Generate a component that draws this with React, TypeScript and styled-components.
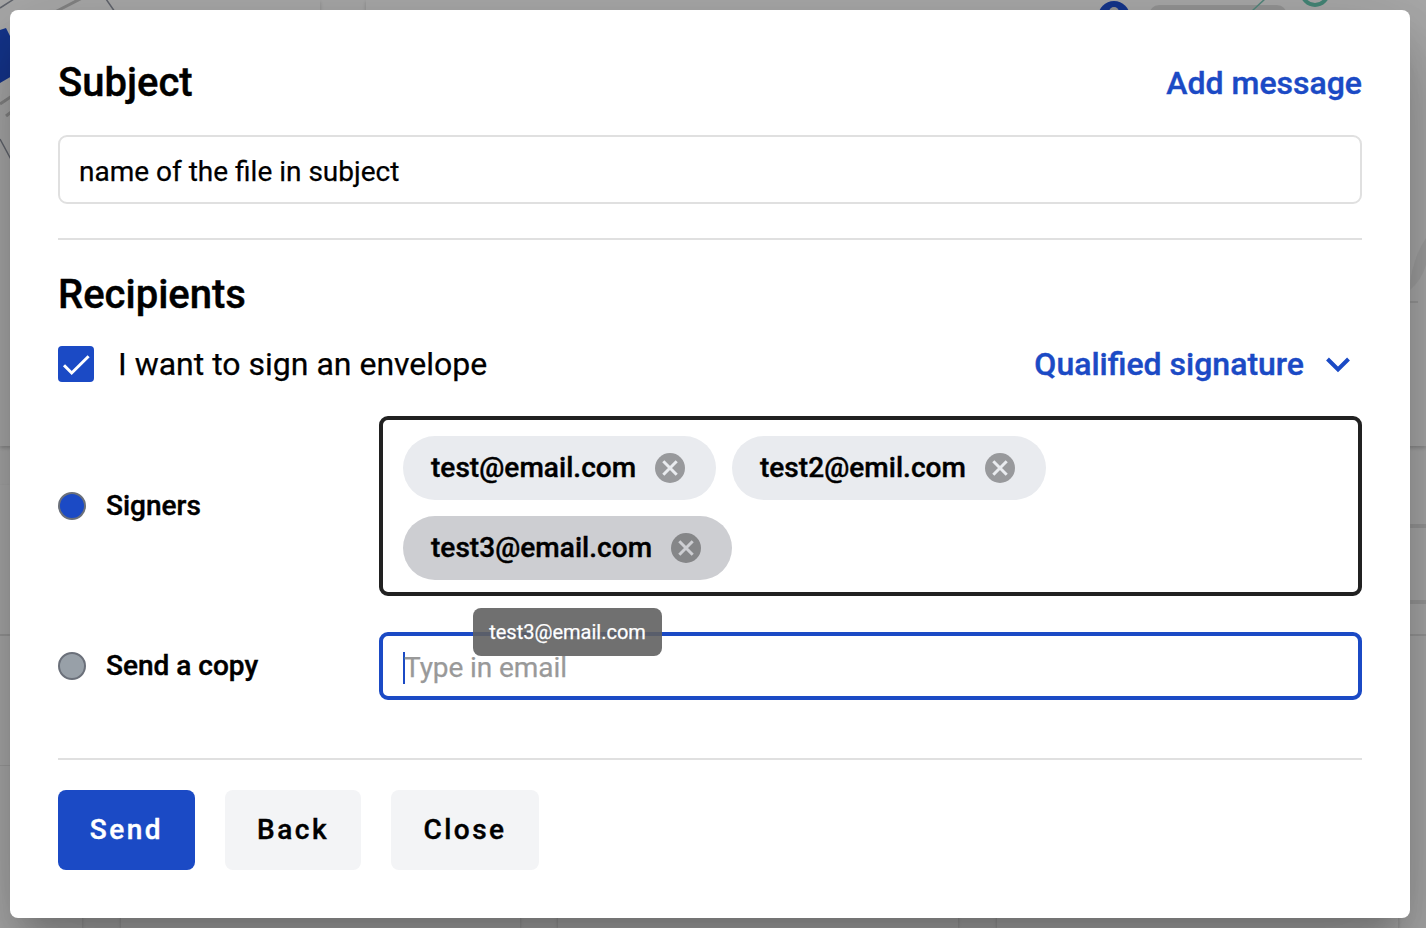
import React from 'react';
import styled, { createGlobalStyle, css } from 'styled-components';

const BLUE = '#1b4ac5';

const GlobalStyle = createGlobalStyle`
  * { box-sizing: border-box; }
  html, body { margin: 0; height: 100%; overflow: hidden; }
  body { font-family: Roboto, 'Liberation Sans', sans-serif; color: #000; background: #fafafa; }
  button, input { font-family: inherit; color: inherit; margin: 0; }
`;

const mediumText = css`
  font-weight: 500;
  -webkit-text-stroke: 0.4px currentColor;
`;

const Stage = styled.div`
  position: relative;
  width: 1426px;
  height: 928px;
  overflow: hidden;
`;

const BackPage = styled.div`
  position: absolute;
  inset: 0;
  display: flex;
  flex-direction: column;
  gap: 39px;
  background: #fafafa;
`;

const HeroRow = styled.div`
  display: grid;
  grid-template-columns: 320px 1060px;
  gap: 46px;
  height: 446px;
`;

const Panel = styled.div`
  background: #fbfbfb;
  box-shadow: 0 2px 4px rgba(0, 0, 0, 0.2);
`;

const Columns = styled.div`
  display: grid;
  grid-template-columns: 82px 399px 400px 401px;
  gap: 38.5px;
  flex: 1;
`;

const PageArt = styled.svg`
  position: absolute;
  inset: 0;
`;

const Backdrop = styled.div`
  position: absolute;
  inset: 0;
  padding: 10px 16px 10px 10px;
  background: rgba(0, 0, 0, 0.32);
`;

const Dialog = styled.section`
  position: relative;
  display: flex;
  flex-direction: column;
  height: 908px;
  padding: 48px;
  border-radius: 8px;
  background: #fff;
  box-shadow:
    0 22px 30px -14px rgba(0, 0, 0, 0.2),
    0 48px 76px 6px rgba(0, 0, 0, 0.14),
    0 18px 92px 16px rgba(0, 0, 0, 0.12);
`;

const SplitRow = styled.div<{ $height: number }>`
  display: flex;
  align-items: center;
  justify-content: space-between;
  height: ${(p) => p.$height}px;
`;

const Title = styled.h2`
  margin: 0;
  padding-top: 2px;
  font-size: 40px;
  line-height: 48px;
  ${mediumText}
`;

const LinkButton = styled.button`
  display: flex;
  align-items: center;
  gap: 22px;
  padding: 0;
  border: 0;
  background: none;
  color: ${BLUE};
  font-size: 32px;
  line-height: 40px;
  ${mediumText}
`;

const MessageButton = styled(LinkButton)`
  padding-top: 2px;
`;

const SubjectInput = styled.input`
  width: 100%;
  height: 69px;
  margin-top: 29px;
  padding: 4px 19px 0;
  border: 2px solid #e0e0e0;
  border-radius: 9px;
  background: #fff;
  font-size: 28px;
  -webkit-text-stroke: 0.25px currentColor;
  outline: none;
`;

const Divider = styled.hr`
  width: 100%;
  height: 2px;
  margin: 0;
  border: 0;
  background: #e0e0e0;
`;

const SubjectSection = styled.div`
  height: 180px;
`;

const RecipientsSection = styled.div`
  height: 518px;
  padding-top: 29px;
`;

const CheckLabel = styled.label`
  display: flex;
  align-items: center;
  gap: 24px;
  font-size: 32px;
  line-height: 40px;
  -webkit-text-stroke: 0.25px currentColor;
`;

const CheckBox = styled.span`
  display: flex;
  width: 36px;
  height: 36px;
  border-radius: 4px;
  background: ${BLUE};
`;

const SignatureSelect = styled(LinkButton)`
  padding-right: 12px;
`;

const Chevron = styled.svg`
  margin-top: 2px;
`;

const RecipientRow = styled.div<{ $height: number; $top: number }>`
  display: grid;
  grid-template-columns: 321px 1fr;
  align-items: center;
  height: ${(p) => p.$height}px;
  margin-top: ${(p) => p.$top}px;
`;

const RoleLabel = styled.div`
  display: flex;
  align-items: center;
  gap: 20px;
  font-size: 28px;
  line-height: 34px;
  ${mediumText}

  span:last-child {
    padding-bottom: 1px;
  }
`;

const RoleDot = styled.span<{ $color: string }>`
  width: 28px;
  height: 28px;
  border: 2px solid #6b707a;
  border-radius: 50%;
  background: ${(p) => p.$color};
`;

const EmailField = styled.div<{ $active?: boolean }>`
  display: flex;
  flex-wrap: wrap;
  align-content: flex-start;
  gap: 16px;
  height: 100%;
  padding: 16px 20px 12px;
  border: 4px solid ${(p) => (p.$active ? BLUE : '#212121')};
  border-radius: 9px;
`;

const Chip = styled.div<{ $hover?: boolean }>`
  display: flex;
  align-items: center;
  gap: 19px;
  height: 64px;
  padding: 0 30.8px 0 28px;
  border-radius: 32px;
  background: ${(p) => (p.$hover ? '#cdced2' : '#e9ebef')};
  font-size: 28px;
  letter-spacing: 0.04px;
  ${mediumText}

  span {
    padding-bottom: 2px;
  }
`;

const Caret = styled.span`
  width: 2px;
  height: 32px;
  background: ${BLUE};
`;

const Placeholder = styled.span`
  margin-left: -17px;
  color: #999;
  font-size: 28px;
  line-height: 32px;
  letter-spacing: -0.08px;
  -webkit-text-stroke: 0.25px currentColor;
`;

const Tooltip = styled.div`
  position: absolute;
  left: 463px;
  top: 598px;
  width: 189px;
  height: 48px;
  border-radius: 8px;
  background: rgba(97, 97, 97, 0.9);
  color: #fff;
  font-size: 20px;
  line-height: 48px;
  text-align: center;
  -webkit-text-stroke: 0.25px currentColor;
`;

const Actions = styled.div`
  display: flex;
  gap: 30px;
  margin-top: 30px;
`;

const ActionButton = styled.button<{ $primary?: boolean; $width: number }>`
  width: ${(p) => p.$width}px;
  height: 80px;
  padding: 0 0 2px;
  border: 0;
  border-radius: 8px;
  background: ${(p) => (p.$primary ? BLUE : '#f3f4f6')};
  color: ${(p) => (p.$primary ? '#fff' : '#000')};
  font-size: 28px;
  letter-spacing: 2.5px;
  ${mediumText}
`;

function RemoveIcon({ hover }: { hover?: boolean }) {
  return (
    <svg width="30" height="30" viewBox="0 0 30 30">
      <circle cx="15" cy="15" r="15" fill={hover ? '#858688' : '#98999c'} />
      <path d="M8.3 8.3l13.4 13.4M21.7 8.3l-13.4 13.4" stroke={hover ? '#cdced2' : '#e9ebef'} strokeWidth="3" />
    </svg>
  );
}

function EmailChip({ email, hover }: { email: string; hover?: boolean }) {
  return (
    <Chip $hover={hover}>
      <span>{email}</span>
      <RemoveIcon hover={hover} />
    </Chip>
  );
}

export default function App() {
  return (
    <Stage>
      <GlobalStyle />
      <BackPage aria-hidden="true">
        <HeroRow>
          <Panel />
          <Panel />
        </HeroRow>
        <Columns>
          <Panel />
          <Panel />
          <Panel />
          <Panel />
        </Columns>
        <PageArt width="1426" height="928" fill="none">
          <path d="M0 30L6 28L12 40V76L0 83Z" fill="#1f4fd0" />
          <path d="M0 8L14 -1M106 -1l9 13M0 139l14 26" stroke="#9297a3" strokeWidth="1.5" />
          <path d="M55 12L84 -3M0 104l12-8M6 116l8-6" stroke="#c4c4c4" strokeWidth="3" />
          <circle cx="1114" cy="17" r="16" fill="#1f4fd0" />
          <circle cx="1114" cy="12" r="5" fill="#ddd" />
          <rect x="1149" y="5" width="138" height="20" rx="10" fill="#dedede" />
          <path d="M1252 11l14-13" stroke="#7cc9b9" strokeWidth="1.5" />
          <circle cx="1315" cy="-8" r="13" stroke="#66c7b1" strokeWidth="4" />
          <path d="M1426 238Q1412 258 1409 291Q1422 280 1426 265Z" fill="#eee" />
          <path d="M1408 302h10" stroke="#e4e4e4" strokeWidth="2" />
          <path d="M1408 526h18M1408 602h18" stroke="#e0e0e0" strokeWidth="4" />
          <path d="M0 635h12M1408 635h18" stroke="#e0e0e0" strokeWidth="2" />
          <path d="M0 765.5h12" stroke="#e8e8e8" />
        </PageArt>
      </BackPage>
      <Backdrop>
        <Dialog>
          <SubjectSection>
            <SplitRow $height={48}>
              <Title>Subject</Title>
              <MessageButton>Add message</MessageButton>
            </SplitRow>
            <SubjectInput defaultValue="name of the file in subject" />
          </SubjectSection>
          <Divider />
          <RecipientsSection>
            <Title>Recipients</Title>
            <SplitRow $height={90}>
              <CheckLabel>
                <CheckBox>
                  <svg width="36" height="36" fill="none">
                    <path d="M6 19.3L13.7 27L30.6 10.2" stroke="#fff" strokeWidth="3" />
                  </svg>
                </CheckBox>
                I want to sign an envelope
              </CheckLabel>
              <SignatureSelect>
                Qualified signature
                <Chevron width="24" height="16" viewBox="0 0 24 16" fill="none">
                  <path d="M1.5 2L12 12.5L22.5 2" stroke={BLUE} strokeWidth="4" />
                </Chevron>
              </SignatureSelect>
            </SplitRow>
            <RecipientRow $height={180} $top={7}>
              <RoleLabel>
                <RoleDot $color={BLUE} />
                <span>Signers</span>
              </RoleLabel>
              <EmailField>
                <EmailChip email="test@email.com" />
                <EmailChip email="test2@emil.com" />
                <EmailChip email="test3@email.com" hover />
              </EmailField>
            </RecipientRow>
            <RecipientRow $height={68} $top={36}>
              <RoleLabel>
                <RoleDot $color="#98a0a8" />
                <span>Send a copy</span>
              </RoleLabel>
              <EmailField $active>
                <Caret />
                <Placeholder>Type in email</Placeholder>
              </EmailField>
            </RecipientRow>
          </RecipientsSection>
          <Divider />
          <Actions>
            <ActionButton $primary $width={137}>Send</ActionButton>
            <ActionButton $width={136}>Back</ActionButton>
            <ActionButton $width={148}>Close</ActionButton>
          </Actions>
          <Tooltip>test3@email.com</Tooltip>
        </Dialog>
      </Backdrop>
    </Stage>
  );
}
